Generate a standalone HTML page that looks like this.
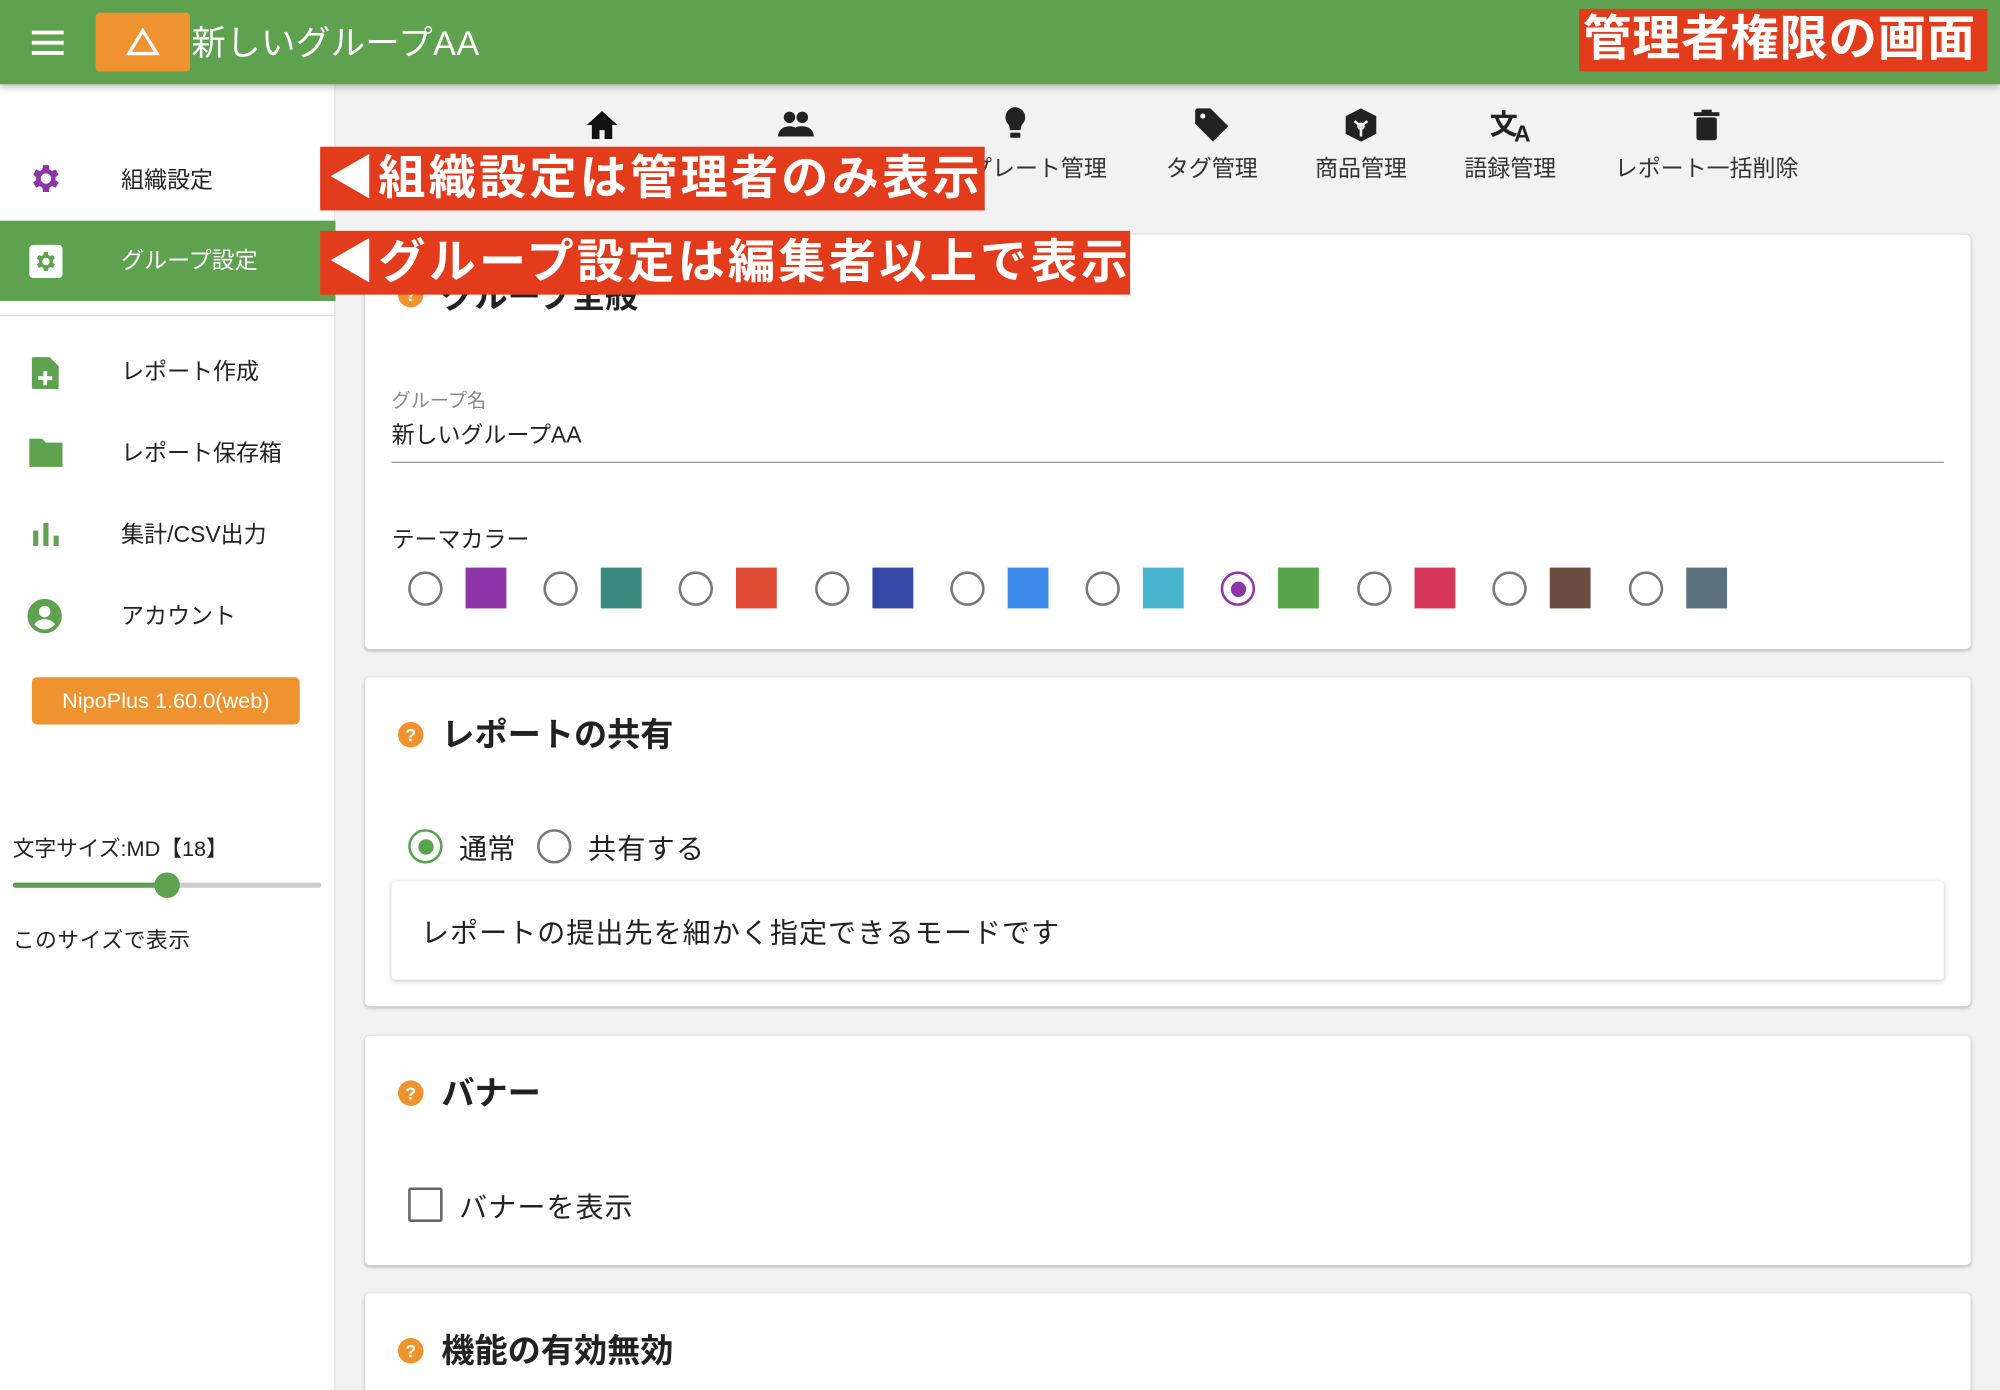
<!DOCTYPE html>
<html><head><meta charset="utf-8"><style>
*{box-sizing:border-box;margin:0;padding:0}
html,body{width:2000px;height:1390px;overflow:hidden;background:#f2f2f2}
body{font-family:"Liberation Sans","Noto Sans CJK JP",sans-serif;color:#222}
#w{position:absolute;left:0;top:0;width:1568px;height:1090px;transform:scale(1.27551);transform-origin:0 0;background:#f2f2f2;overflow:hidden}
.a{position:absolute}
.hdr{left:0;top:0;width:1568px;height:66px;background:#5ea24f;box-shadow:0 2px 6px rgba(0,0,0,.3);z-index:3}
.side{left:0;top:66px;width:263px;height:1030px;background:#fff;border-right:1px solid #e3e3e3}
.it{position:absolute;left:95px;font-size:18px;color:#222;line-height:20px}
.nav{position:absolute;top:118px;font-size:18px;color:#333;transform:translateX(-50%);white-space:nowrap}
.card{position:absolute;left:286px;width:1259px;background:#fff;border-radius:4px;box-shadow:0 1px 3px rgba(0,0,0,.25)}
.ttl{position:absolute;left:60px;font-size:26px;font-weight:bold;color:#222}
.q{position:absolute;left:26px;width:20px;height:20px;border-radius:50%;background:#ef9330;color:#fff;font-size:14px;font-weight:bold;text-align:center;line-height:20px}
.rd{position:absolute;width:27px;height:27px;border:2px solid #777;border-radius:50%}
.sq{position:absolute;width:32px;height:32px}
.red{position:absolute;background:#e23c1c;color:#fff;font-weight:bold;white-space:nowrap;z-index:5;overflow:hidden}
</style></head><body><div id="w">
<div class="a hdr">
 <div class="a" style="left:25px;top:24px;width:25px;height:3px;background:#fff;box-shadow:0 8px 0 #fff,0 16px 0 #fff"></div>
 <div class="a" style="left:75px;top:10px;width:74px;height:46px;background:#ef9330;border-radius:3px"><svg class="a" style="left:24px;top:12px" width="26" height="22" viewBox="0 0 26 22"><path d="M13 2L2 20H24Z" fill="none" stroke="#fff" stroke-width="2.6"/></svg></div>
 <div class="a" style="left:150px;top:12px;font-size:27px;color:#fff;letter-spacing:0.3px">新しいグループAA</div>
</div>
<div class="red" style="left:1238px;top:7px;width:320px;height:49px;font-size:38px;line-height:49px;padding-left:3px;letter-spacing:0.5px">管理者権限の画面</div>

<div class="a side">
 <svg class="a" style="left:22px;top:60px" width="28" height="28" viewBox="0 0 24 24"><path fill="#8e35a8" d="M19.4 13a7.5 7.5 0 000-2l2.1-1.6-2-3.5-2.5 1a7.7 7.7 0 00-1.7-1L15 3h-4l-.4 2.9a7.7 7.7 0 00-1.7 1l-2.5-1-2 3.5L6.5 11a7.5 7.5 0 000 2l-2.1 1.6 2 3.5 2.5-1c.5.4 1.100.7 1.700 1L11 21h4l.4-2.9c.6-.3 1.2-.6 1.7-1l2.5 1 2-3.5zM13 15.5a3.5 3.5 0 110-7 3.5 3.5 0 010 7z" transform="translate(-1 0)"/></svg>
 <div class="it" style="top:65px">組織設定</div>
 <div class="a" style="left:0;top:107px;width:263px;height:63px;background:#5ea24f"></div>
 <div class="a" style="left:23px;top:126px;width:26px;height:26px;background:#fff;border-radius:3px"></div>
 <svg class="a" style="left:26px;top:129px" width="20" height="20" viewBox="0 0 24 24"><path fill="#5ea24f" d="M19.4 13a7.5 7.5 0 000-2l2.1-1.6-2-3.5-2.5 1a7.7 7.7 0 00-1.7-1L15 3h-4l-.4 2.9a7.7 7.7 0 00-1.7 1l-2.5-1-2 3.5L6.5 11a7.5 7.5 0 000 2l-2.1 1.6 2 3.5 2.5-1c.5.4 1.1.7 1.7 1L11 21h4l.4-2.9c.6-.3 1.2-.6 1.7-1l2.5 1 2-3.5zM13 15.5a3.5 3.5 0 110-7 3.5 3.5 0 010 7z" transform="translate(-1 0)"/></svg>
 <div class="it" style="top:128px;color:#fff">グループ設定</div>
 <div class="a" style="left:0;top:181px;width:263px;height:1px;background:#ddd"></div>
 <svg class="a" style="left:24px;top:212px" width="24" height="28" viewBox="0 0 24 28"><path fill="#5ea24f" d="M2 2h13l7 7v17a1 1 0 01-1 1H2a1 1 0 01-1-1V3a1 1 0 011-1z"/><path fill="#fff" d="M10 13h3v4h4v3h-4v4h-3v-4H6v-3h4z"/></svg>
 <div class="it" style="top:215px">レポート作成</div>
 <svg class="a" style="left:21px;top:276px" width="30" height="26" viewBox="0 0 30 26"><path fill="#5ea24f" d="M2 2h10l3 3h13v19H2z"/></svg>
 <div class="it" style="top:279px">レポート保存箱</div>
 <svg class="a" style="left:25px;top:342px" width="22" height="22" viewBox="0 0 22 22"><rect x="1" y="8" width="4" height="12" fill="#5ea24f"/><rect x="9" y="2" width="4" height="18" fill="#5ea24f"/><rect x="17" y="12" width="4" height="8" fill="#5ea24f"/></svg>
 <div class="it" style="top:343px">集計/CSV出力</div>
 <svg class="a" style="left:21px;top:403px" width="28" height="28" viewBox="0 0 28 28"><circle cx="14" cy="14" r="13.5" fill="#5ea24f"/><circle cx="14" cy="10.5" r="4.5" fill="#fff"/><path d="M6 20.5c2-3 5-4 8-4s6 1 8 4c-2 2.5-5 4-8 4s-6-1.5-8-4z" fill="#fff"/></svg>
 <div class="it" style="top:407px">アカウント</div>
 <div class="a" style="left:25px;top:465px;width:210px;height:37px;background:#ef9330;border-radius:4px;color:#fff;font-size:17px;text-align:center;line-height:37px">NipoPlus 1.60.0(web)</div>
 <div class="a" style="left:10px;top:585px;font-size:17px">文字サイズ:MD【18】</div>
 <div class="a" style="left:10px;top:626px;width:242px;height:4px;background:#ccc;border-radius:2px"></div>
 <div class="a" style="left:10px;top:626px;width:121px;height:4px;background:#5ea24f;border-radius:2px"></div>
 <div class="a" style="left:121px;top:618px;width:20px;height:20px;border-radius:50%;background:#5ea24f"></div>
 <div class="a" style="left:10px;top:657px;font-size:17px;letter-spacing:0.5px">このサイズで表示</div>
</div>

<!-- top nav -->
<svg class="a" style="left:459px;top:86px" width="26" height="24" viewBox="0 0 26 24"><path d="M13 1L1 12h4v11h6v-7h4v7h6V12h4z" fill="#111"/></svg>
<svg class="a" style="left:609px;top:86px" width="30" height="22" viewBox="0 0 30 22"><circle cx="10" cy="6" r="4.5" fill="#222"/><circle cx="20" cy="6" r="4.5" fill="#222"/><path d="M1 21c0-5 4-8 9-8s9 3 9 8z M17 21c0-3-1-5-2-7 1-1 3-1 5-1 5 0 9 3 9 8z" fill="#222"/></svg>
<svg class="a" style="left:785px;top:83px" width="22" height="30" viewBox="0 0 22 30"><path d="M11 1a8 8 0 00-5 14l1 4h8l1-4A8 8 0 0011 1z" fill="#222"/><rect x="7" y="21" width="8" height="4" rx="1" fill="#222"/></svg>
<div class="nav" style="left:796px"><span style="background:#f2f2f2">テンプレート管理</span></div>
<svg class="a" style="left:935px;top:83px" width="30" height="30" viewBox="0 0 30 30"><path d="M2 4a2 2 0 012-2h10l14 14-12 12L2 14z" fill="#222"/><circle cx="8" cy="8" r="2" fill="#f2f2f2"/></svg>
<div class="nav" style="left:950px">タグ管理</div>
<svg class="a" style="left:1054px;top:84px" width="26" height="28" viewBox="0 0 26 28"><path d="M13 1L25 7v14l-12 6L1 21V7z" fill="#222"/><path d="M13 15l-5-4M13 15l5-4M13 15v8" stroke="#f2f2f2" stroke-width="2"/><circle cx="13" cy="15" r="2.2" fill="none" stroke="#f2f2f2" stroke-width="1.5"/></svg>
<div class="nav" style="left:1067px">商品管理</div>
<div class="a" style="left:1168px;top:80px;font-size:22px;font-weight:bold;color:#222">文<span style="font-size:18px;position:relative;top:6px;left:-3px">A</span></div>
<div class="nav" style="left:1184px">語録管理</div>
<svg class="a" style="left:1327px;top:85px" width="22" height="26" viewBox="0 0 22 26"><rect x="3" y="7" width="16" height="18" rx="2" fill="#222"/><rect x="1" y="3" width="20" height="3" fill="#222"/><rect x="7" y="1" width="8" height="3" fill="#222"/></svg>
<div class="nav" style="left:1338px">レポート一括削除</div>

<div class="red" style="left:251px;top:115px;width:521px;height:50px;font-size:37px;line-height:50px;padding-left:6px;letter-spacing:2.5px">◀組織設定は管理者のみ表示</div>
<div class="red" style="left:251px;top:181px;width:635px;height:50px;font-size:37px;line-height:50px;padding-left:6px;letter-spacing:2.5px">◀グループ設定は編集者以上で表示</div>

<div class="card" style="top:184px;height:325px">
 <div class="q" style="top:37px">?</div><div class="ttl" style="top:28px">グループ全般</div>
 <div class="a" style="left:21px;top:119px;font-size:15px;color:#888">グループ名</div>
 <div class="a" style="left:21px;top:143px;font-size:18px">新しいグループAA</div>
 <div class="a" style="left:21px;top:178px;width:1217px;height:1px;background:#999"></div>
 <div class="a" style="left:21px;top:225px;font-size:18px">テーマカラー</div>
 <div class="rd" style="left:34px;top:264px"></div><div class="sq" style="left:79px;top:261px;background:#8e35a8"></div>
 <div class="rd" style="left:140px;top:264px"></div><div class="sq" style="left:185px;top:261px;background:#3a8a7e"></div>
 <div class="rd" style="left:246px;top:264px"></div><div class="sq" style="left:291px;top:261px;background:#e04b35"></div>
 <div class="rd" style="left:353px;top:264px"></div><div class="sq" style="left:398px;top:261px;background:#3648a5"></div>
 <div class="rd" style="left:459px;top:264px"></div><div class="sq" style="left:504px;top:261px;background:#3c88e8"></div>
 <div class="rd" style="left:565px;top:264px"></div><div class="sq" style="left:610px;top:261px;background:#4ab4cf"></div>
 <div class="rd" style="left:671px;top:264px;border-color:#8e35a8"><div class="a" style="left:5.5px;top:5.5px;width:12px;height:12px;border-radius:50%;background:#8e35a8"></div></div><div class="sq" style="left:716px;top:261px;background:#58a44a"></div>
 <div class="rd" style="left:778px;top:264px"></div><div class="sq" style="left:823px;top:261px;background:#d5365a"></div>
 <div class="rd" style="left:884px;top:264px"></div><div class="sq" style="left:929px;top:261px;background:#6b4c40"></div>
 <div class="rd" style="left:991px;top:264px"></div><div class="sq" style="left:1036px;top:261px;background:#5a717c"></div>
</div>

<div class="card" style="top:531px;height:258px">
 <div class="q" style="top:35px">?</div><div class="ttl" style="top:25px">レポートの共有</div>
 <div class="rd" style="left:34px;top:119px;border-color:#58a44a"><div class="a" style="left:5.5px;top:5.5px;width:12px;height:12px;border-radius:50%;background:#58a44a"></div></div>
 <div class="a" style="left:74px;top:117px;font-size:22px">通常</div>
 <div class="rd" style="left:135px;top:119px"></div>
 <div class="a" style="left:175px;top:117px;font-size:22px;letter-spacing:1px">共有する</div>
 <div class="a" style="left:21px;top:160px;width:1217px;height:77px;background:#fff;box-shadow:0 1px 4px rgba(0,0,0,.25);border-radius:3px"><div class="a" style="left:23px;top:23px;font-size:22px;letter-spacing:0.8px">レポートの提出先を細かく指定できるモードです</div></div>
</div>

<div class="card" style="top:812px;height:180px">
 <div class="q" style="top:35px">?</div><div class="ttl" style="top:25px">バナー</div>
 <div class="a" style="left:34px;top:119px;width:27px;height:27px;border:2px solid #666;border-radius:2px"></div>
 <div class="a" style="left:74px;top:117px;font-size:22px;letter-spacing:0.8px">バナーを表示</div>
</div>

<div class="card" style="top:1014px;height:100px">
 <div class="q" style="top:35px">?</div><div class="ttl" style="top:25px">機能の有効無効</div>
</div>
</div></body></html>
